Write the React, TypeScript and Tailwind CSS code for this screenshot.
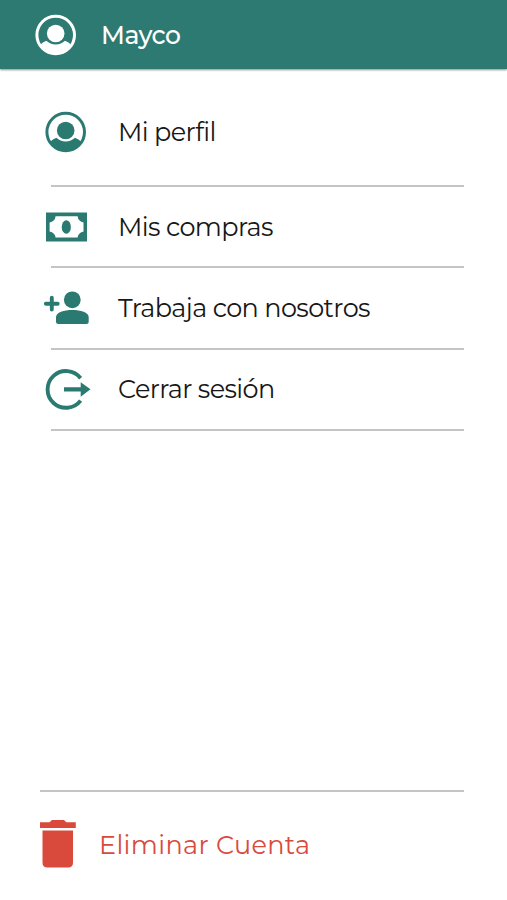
import type { ReactNode } from "react";

function ProfileIcon() {
  return (
    <svg width="42" height="42" viewBox="0 0 42 42" fill="currentColor">
      <circle cx="20.7" cy="21" r="18.8" fill="none" stroke="currentColor" strokeWidth="3" />
      <circle cx="20.7" cy="19.5" r="8.8" />
      <path d="M5 31Q7.6 28 11.4 26.7Q15.2 30.4 20.7 30.4Q26.2 30.4 30 26.7Q33.8 28 36.4 31A18.8 18.8 0 0 1 5 31Z" />
    </svg>
  );
}

function CashIcon() {
  return (
    <svg width="42" height="30" viewBox="0 0 42 30">
      <path fill="currentColor" d="M-0.3 0.6H41V29.4H-0.3Z" />
      <path
        fill="#fff"
        d="M9.6 4.2H31.6Q31.8 6.8 33.6 8.4Q35 10 37.5 10.6V19.4Q35 20 33.6 21.4Q31.8 23 31.6 25.5H9.6Q9.4 23 7.6 21.4Q6.2 20 3.6 19.4V10.6Q6.2 10 7.6 8.4Q9.4 6.8 9.6 4.2Z"
      />
      <ellipse cx="20.3" cy="15" rx="4.6" ry="6.7" fill="currentColor" />
    </svg>
  );
}

function PersonAddIcon() {
  return (
    <svg width="46" height="36" viewBox="0 0 46 36" fill="currentColor">
      <path d="M7.8 7.8V19.6M1.9 13.7H13.7" fill="none" stroke="currentColor" strokeWidth="3.9" strokeLinecap="round" />
      <circle cx="28.3" cy="9.8" r="8.4" />
      <path d="M12 31.5V27C12 22.5 20 20 28.3 20S44.7 22.5 44.7 27V31.5Q44.7 34 42.2 34H14.5Q12 34 12 31.5Z" />
    </svg>
  );
}

function LogoutIcon() {
  return (
    <svg width="48" height="42" viewBox="0 0 48 42" fill="currentColor">
      <path d="M36.6 10.2A18.4 18.4 0 1 0 36.6 32.6" fill="none" stroke="currentColor" strokeWidth="3.9" />
      <path d="M20 19.2H36.7V14.3L46.5 21.3L36.7 28.7V23.4H20Z" />
    </svg>
  );
}

function TrashIcon() {
  return (
    <svg width="37" height="48" viewBox="0 0 37 48" fill="currentColor">
      <path d="M0 2.3H9.5L12 0H24L26.3 2.3H35.8V8H0Z" />
      <path d="M2.5 10.6H33V42.5Q33 47.6 28.1 47.6H7.4Q2.5 47.6 2.5 42.5Z" />
    </svg>
  );
}

type MenuItemProps = {
  icon: ReactNode;
  label: string;
  rowClass: string;
};

function MenuItem({ icon, label, rowClass }: MenuItemProps) {
  return (
    <li>
      <button className={`flex w-full items-center pl-11 text-left ${rowClass}`}>
        <span className="flex w-[74px] shrink-0 items-center text-[#2b7a72]">{icon}</span>
        <span className="whitespace-nowrap text-[25.5px] leading-8 tracking-[-0.6px] text-[#171717]">{label}</span>
      </button>
      <div className="ml-[51px] mr-[43px] h-[2px] bg-[#c4c4c4]" />
    </li>
  );
}

export default function App() {
  return (
    <div className="flex h-screen flex-col overflow-hidden bg-white font-['Montserrat','Inter',sans-serif]">
      <header className="flex h-[69px] shrink-0 items-center bg-[#2d7a72] pl-[35px] text-white shadow-[0_1px_2px_rgba(0,0,0,0.45)]">
        <ProfileIcon />
        <span className="ml-[24px] mt-px text-[25px] font-medium leading-8 tracking-[-0.5px]">Mayco</span>
      </header>

      <ul className="pt-[9px]">
        <MenuItem icon={<span className="ml-[1px]"><ProfileIcon /></span>} label="Mi perfil" rowClass="h-[107px]" />
        <MenuItem icon={<span className="ml-[2px]"><CashIcon /></span>} label="Mis compras" rowClass="h-[79px]" />
        <MenuItem icon={<PersonAddIcon />} label="Trabaja con nosotros" rowClass="h-[80px]" />
        <MenuItem icon={<LogoutIcon />} label="Cerrar sesión" rowClass="h-[79px] pb-px" />
      </ul>

      <footer className="mt-auto h-[110px] pl-10">
        <div className="mr-[43px] h-[2px] bg-[#c4c4c4]" />
        <button className="flex h-[103px] items-center text-[#d94a3d]">
          <TrashIcon />
          <span className="ml-[22px] mt-[2px] whitespace-nowrap text-[25.5px] leading-8 tracking-[0.35px]">Eliminar Cuenta</span>
        </button>
      </footer>
    </div>
  );
}
